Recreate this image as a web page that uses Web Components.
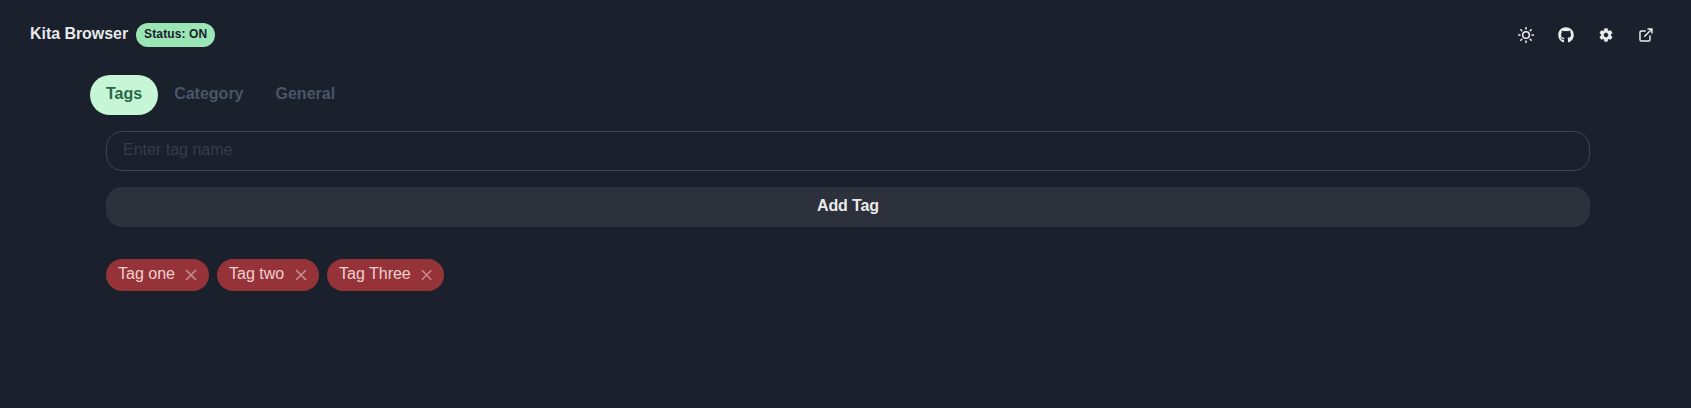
<!DOCTYPE html>
<html lang="en"><head><meta charset="utf-8"><title>Kita Browser</title>
<style>html,body{margin:0;height:100%;background:#1a202c}body{font-family:"Liberation Sans",Arial,sans-serif;font-size:16px;line-height:24px;color:rgba(255,255,255,.92);overflow:hidden}</style></head>
<body>
<kita-app></kita-app>
<script>
const define = (name, html) => customElements.define(name, class extends HTMLElement {
  constructor() { super(); this.attachShadow({mode: 'open'}).innerHTML = html; }
});
define('status-badge', `<style>:host{display:block;box-sizing:border-box;height:24px;padding:0 8px;border-radius:12px;background:#9ae6b4;color:#1a202c;font:bold 12px/22px "Liberation Sans",sans-serif;letter-spacing:.12px;white-space:nowrap}</style><slot></slot>`);
define('nav-tab', `<style>:host{display:block;box-sizing:border-box;height:40px;padding:0 16px;border-radius:20px;color:#4a5568;font-weight:bold;line-height:37px;white-space:nowrap}:host([selected]){background:#c6f6d5;color:#276749}</style><slot></slot>`);
define('tag-input', `<style>:host{display:block}input{display:block;width:100%;box-sizing:border-box;height:40px;padding:0 16px 3px;border:1px solid #41444f;border-radius:16px;background:transparent;color:inherit;font:inherit;outline:0}input::placeholder{color:#373c47;opacity:1}</style><input placeholder="Enter tag name">`);
define('wide-button', `<style>:host{display:block}button{display:block;width:100%;height:40px;border:0;padding:0 0 3px;border-radius:16px;background:#2d313c;color:inherit;font:inherit;font-weight:bold;letter-spacing:-.1px}</style><button><slot></slot></button>`);
define('tag-chip', `<style>:host{display:flex;box-sizing:border-box;height:32px;padding:0 12px;border-radius:16px;background:#953338;color:#f0cfd1;line-height:29px;align-items:flex-start;justify-content:space-between;white-space:nowrap}svg{display:block;width:12px;height:12px;margin:10px 0 0 10px;color:#c98a8f}</style><slot></slot><svg viewBox="0 0 12 12"><path d="M1.5 1.5l9 9M10.5 1.5l-9 9" stroke="currentColor" stroke-width="1.7" stroke-linecap="round"/></svg>`);
const icons = {
  sun: `<svg viewBox="0 0 24 24"><g fill="none" stroke="currentColor" stroke-width="2.3" stroke-linecap="round" stroke-linejoin="round"><circle cx="12" cy="12" r="5"/><path d="M12 1v2M12 21v2M4.22 4.22l1.42 1.42M18.36 18.36l1.42 1.42M1 12h2M21 12h2M4.22 19.78l1.42-1.42M18.36 5.64l1.42-1.42"/></g></svg>`,
  github: `<svg viewBox="0 0 496 512"><path fill="currentColor" d="M165.9 397.4c0 2-2.3 3.6-5.2 3.6-3.3.3-5.6-1.3-5.6-3.6 0-2 2.3-3.6 5.2-3.6 3-.3 5.6 1.3 5.6 3.6zm-31.1-4.5c-.7 2 1.3 4.3 4.3 4.9 2.6 1 5.6 0 6.2-2s-1.3-4.3-4.3-5.2c-2.6-.7-5.5.3-6.2 2.3zm44.2-1.7c-2.9.7-4.9 2.6-4.6 4.9.3 2 2.9 3.3 5.9 2.6 2.9-.7 4.9-2.6 4.6-4.6-.3-1.9-3-3.2-5.9-2.9zM244.8 8C106.1 8 0 113.3 0 252c0 110.9 69.8 205.8 169.5 239.2 12.8 2.3 17.3-5.6 17.3-12.1 0-6.2-.3-40.4-.3-61.4 0 0-70 15-84.7-29.8 0 0-11.4-29.1-27.8-36.6 0 0-22.9-15.7 1.6-15.4 0 0 24.9 2 38.6 25.8 21.9 38.6 58.6 27.5 72.9 20.9 2.3-16 8.8-27.1 16-33.7-55.9-6.2-112.3-14.3-112.3-110.5 0-27.5 7.6-41.3 23.6-58.9-2.6-6.5-11.1-33.3 2.6-67.9 20.9-6.5 69 27 69 27 20-5.6 41.5-8.5 62.8-8.5s42.8 2.9 62.8 8.5c0 0 48.1-33.6 69-27 13.7 34.7 5.2 61.4 2.6 67.9 16 17.7 25.8 31.5 25.8 58.9 0 96.5-58.9 104.2-114.8 110.5 9.2 7.9 17 22.9 17 46.4 0 33.7-.3 75.4-.3 83.6 0 6.5 4.6 14.4 17.3 12.1C428.2 457.8 496 362.9 496 252 496 113.3 383.5 8 244.8 8z"/></svg>`,
  gear: `<svg viewBox="0 0 24 24"><path fill="currentColor" stroke="currentColor" stroke-width=".5" d="M19.14 12.94c.04-.3.06-.61.06-.94 0-.32-.02-.64-.07-.94l2.03-1.58c.18-.14.23-.41.12-.61l-1.92-3.32c-.12-.22-.37-.29-.59-.22l-2.39.96c-.5-.38-1.03-.7-1.62-.94l-.36-2.54c-.04-.24-.24-.41-.48-.41h-3.84c-.24 0-.43.17-.47.41l-.36 2.54c-.59.24-1.13.57-1.62.94l-2.39-.96c-.22-.08-.47 0-.59.22L2.74 8.87c-.12.21-.08.47.12.61l2.03 1.58c-.05.3-.09.63-.09.94s.02.64.07.94l-2.03 1.58c-.18.14-.23.41-.12.61l1.92 3.32c.12.22.37.29.59.22l2.39-.96c.5.38 1.03.7 1.62.94l.36 2.54c.05.24.24.41.48.41h3.84c.24 0 .44-.17.47-.41l.36-2.54c.59-.24 1.13-.56 1.62-.94l2.39.96c.22.08.47 0 .59-.22l1.92-3.32c.12-.22.07-.47-.12-.61l-2.01-1.58zM12 15.6c-1.98 0-3.6-1.62-3.6-3.6s1.62-3.6 3.6-3.6 3.6 1.62 3.6 3.6-1.62 3.6-3.6 3.6z"/></svg>`,
  external: `<svg viewBox="0 0 24 24"><g fill="none" stroke="currentColor" stroke-width="2.2" stroke-linecap="round"><path d="M15 3h6v6M10 14L21 3M18 13v6a2 2 0 0 1-2 2H5a2 2 0 0 1-2-2V8a2 2 0 0 1 2-2h6"/></g></svg>`
};
customElements.define('ui-icon', class extends HTMLElement {
  connectedCallback() { this.attachShadow({mode:'open'}).innerHTML = '<style>:host{display:block;width:16px;height:16px}svg{display:block;width:100%;height:100%}</style>' + icons[this.getAttribute('name')]; }
});
define('kita-app', `<style>
:host{display:block}
header{display:flex;align-items:center;height:40px;padding:15px 37px 0 30px}
h1{margin:0 8px 0 0;padding-bottom:3px;font-size:16px;line-height:24px;letter-spacing:-.05px}
.icons{display:flex;gap:24px;margin-left:auto}
nav{display:flex;padding:20px 90px 0}
main{padding:16px 101px 0 106px;display:grid;gap:16px}
.tags{display:grid;grid-template-columns:103px 102px 117px;gap:8px;padding-top:16px}
</style>
<header><h1>Kita Browser</h1><status-badge>Status: ON</status-badge><div class="icons"><ui-icon name="sun"></ui-icon><ui-icon name="github"></ui-icon><ui-icon name="gear"></ui-icon><ui-icon name="external"></ui-icon></div></header>
<nav><nav-tab selected>Tags</nav-tab><nav-tab>Category</nav-tab><nav-tab>General</nav-tab></nav>
<main><tag-input></tag-input><wide-button>Add Tag</wide-button><div class="tags"><tag-chip>Tag one</tag-chip><tag-chip>Tag two</tag-chip><tag-chip>Tag Three</tag-chip></div></main>`);
</script>
</body></html>
